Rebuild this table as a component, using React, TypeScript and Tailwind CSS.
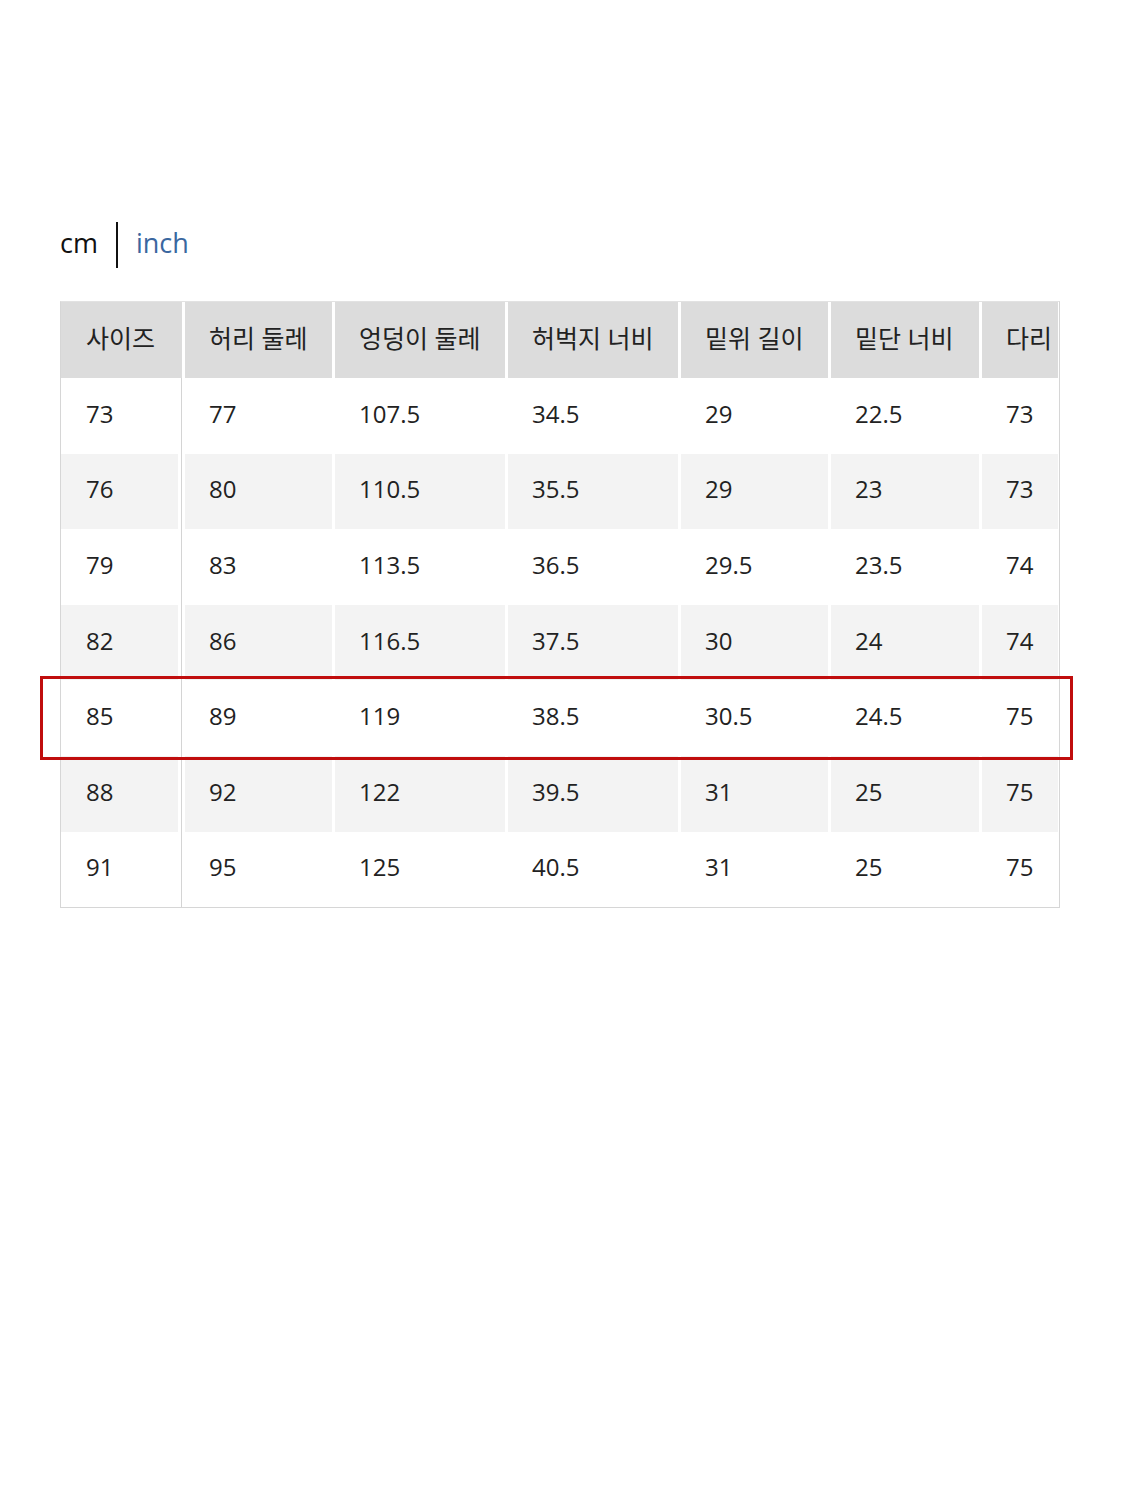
import React from 'react';

const headers = ['사이즈', '허리 둘레', '엉덩이 둘레', '허벅지 너비', '밑위 길이', '밑단 너비', '다리'];

const rows: string[][] = [
  ['73', '77', '107.5', '34.5', '29', '22.5', '73'],
  ['76', '80', '110.5', '35.5', '29', '23', '73'],
  ['79', '83', '113.5', '36.5', '29.5', '23.5', '74'],
  ['82', '86', '116.5', '37.5', '30', '24', '74'],
  ['85', '89', '119', '38.5', '30.5', '24.5', '75'],
  ['88', '92', '122', '39.5', '31', '25', '75'],
  ['91', '95', '125', '40.5', '31', '25', '75'],
];

// widths of columns 2..7
const widths = ['w-[147px]', 'w-[170px]', 'w-[170px]', 'w-[147px]', 'w-[148px]', 'w-[76px]'];

const font = { fontFamily: '"Open Sans", "Noto Sans CJK KR", sans-serif' };

export default function App() {
  return (
    <div className="w-[1125px] h-[1497px] bg-white text-[#222]" style={font}>
      <div className="pl-[60px] pt-[222px]">
        <div className="flex items-center h-[46px] text-[27px] pb-[4px]">
          <span className="text-[#111]">cm</span>
          <span className="mx-[18px] mt-[4px] w-[2px] h-[46px] bg-[#111]" />
          <span className="text-[#3a67a0]">inch</span>
        </div>

        <div className="relative mt-[33px] w-[1000px] border border-[#d6d6d6] border-t-[#e2e2e2]">
          <div className="flex gap-[3px] h-[76px] bg-white text-[25px]">
            <div className="w-[121px] bg-[#dcdcdc] flex items-center pl-[25px] pb-[3px] whitespace-nowrap">{headers[0]}</div>
            {headers.slice(1).map((h, i) => (
              <div key={h} className={`${widths[i]} bg-[#dcdcdc] flex items-center pl-[24px] pb-[3px] whitespace-nowrap overflow-hidden`}>
                {h}
              </div>
            ))}
          </div>

          {rows.map((r, ri) => {
            const bg = ri % 2 === 1 ? 'bg-[#f3f3f3]' : 'bg-white';
            return (
              <div key={r[0]} className="flex h-[75.6px] bg-white text-[24px]">
                <div className={`w-[117px] ${bg} flex items-center pl-[25px] pb-[4px]`}>{r[0]}</div>
                <div className="w-[7px] flex justify-center">
                  <div className="w-px h-full bg-[#d4d4d4]" />
                </div>
                <div className="flex gap-[3px]">
                  {r.slice(1).map((v, i) => (
                    <div key={i} className={`${widths[i]} ${bg} flex items-center pl-[24px] pb-[4px]`}>
                      {v}
                    </div>
                  ))}
                </div>
              </div>
            );
          })}

          <div className="absolute left-[-21px] top-[374px] w-[1033px] h-[84px] border-[3px] border-[#c00d0d]" />
        </div>
      </div>
    </div>
  );
}
